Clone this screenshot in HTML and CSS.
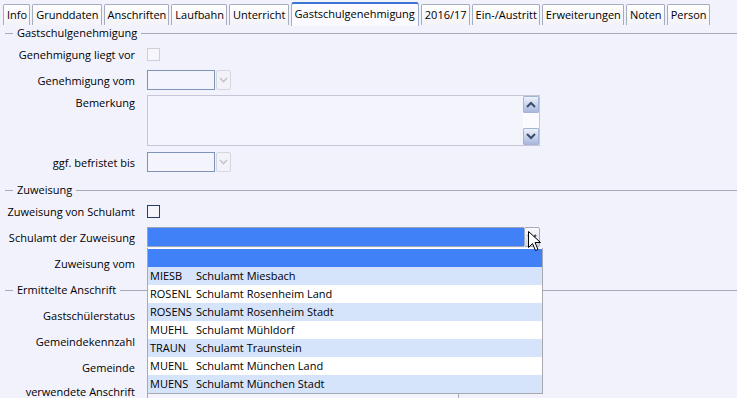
FILE: index.html
```html
<!DOCTYPE html>
<html lang="de">
<head>
<meta charset="utf-8">
<title>Gastschulgenehmigung</title>
<link rel="stylesheet" href="styles.css">
</head>
<body>
<div class="tabs">
  <div class="tab">Info</div>
  <div class="tab">Grunddaten</div>
  <div class="tab">Anschriften</div>
  <div class="tab">Laufbahn</div>
  <div class="tab">Unterricht</div>
  <div class="tab active">Gastschulgenehmigung</div>
  <div class="tab">2016/17</div>
  <div class="tab">Ein-/Austritt</div>
  <div class="tab">Erweiterungen</div>
  <div class="tab">Noten</div>
  <div class="tab">Person</div>
</div>

<div class="content">
  <div class="group-head g1"><span>Gastschulgenehmigung</span></div>
  <div class="row"><label>Genehmigung liegt vor</label><span class="check disabled"></span></div>
  <div class="row"><label>Genehmigung vom</label>
    <div class="date"><span class="date-box"></span><span class="date-btn"><svg width="9" height="6" viewBox="0 0 9 6"><polyline points="1,1 4.5,4.5 8,1" fill="none" stroke="#c4c4cc" stroke-width="1.6"/></svg></span></div>
  </div>
  <div class="row memo-row"><label>Bemerkung</label>
    <div class="memo">
      <div class="scroll">
        <span class="sbtn"><svg width="10" height="7" viewBox="0 0 10 7"><polyline points="1,6 5,2 9,6" fill="none" stroke="#3c4c6c" stroke-width="2"/></svg></span>
        <span class="strack"></span>
        <span class="sbtn"><svg width="10" height="7" viewBox="0 0 10 7"><polyline points="1,1 5,5 9,1" fill="none" stroke="#3c4c6c" stroke-width="2"/></svg></span>
      </div>
    </div>
  </div>
  <div class="row"><label>ggf. befristet bis</label>
    <div class="date"><span class="date-box"></span><span class="date-btn"><svg width="9" height="6" viewBox="0 0 9 6"><polyline points="1,1 4.5,4.5 8,1" fill="none" stroke="#c4c4cc" stroke-width="1.6"/></svg></span></div>
  </div>

  <div class="group-head g2"><span>Zuweisung</span></div>
  <div class="row"><label>Zuweisung von Schulamt</label><span class="check"></span></div>
  <div class="row"><label>Schulamt der Zuweisung</label>
    <div class="combo">
      <span class="combo-box"></span>
      <span class="combo-btn"><svg width="10" height="6" viewBox="0 0 10 6"><polyline points="1,1 5,5 9,1" fill="none" stroke="#3c4c6c" stroke-width="2"/></svg></span>
      <svg class="cursor" width="13" height="21" viewBox="0 0 13 21"><path d="M0.5,0.5 L0.5,16.5 L4.5,12.5 L7.5,19.5 L10,18.5 L7,11.5 L12.5,11.5 Z" fill="#fff" stroke="#000" stroke-width="1"/></svg>
      <div class="list">
        <div class="item selected"><span class="code"></span><span></span></div>
        <div class="item alt"><span class="code">MIESB</span><span>Schulamt Miesbach</span></div>
        <div class="item"><span class="code">ROSENL</span><span>Schulamt Rosenheim Land</span></div>
        <div class="item alt"><span class="code">ROSENS</span><span>Schulamt Rosenheim Stadt</span></div>
        <div class="item"><span class="code">MUEHL</span><span>Schulamt Mühldorf</span></div>
        <div class="item alt"><span class="code">TRAUN</span><span>Schulamt Traunstein</span></div>
        <div class="item"><span class="code">MUENL</span><span>Schulamt München Land</span></div>
        <div class="item alt"><span class="code">MUENS</span><span>Schulamt München Stadt</span></div>
      </div>
    </div>
  </div>
  <div class="row"><label>Zuweisung vom</label><span></span></div>

  <div class="group-head g3"><span>Ermittelte Anschrift</span></div>
  <div class="rows3">
    <div class="row"><label>Gastschülerstatus</label><span></span></div>
    <div class="row"><label>Gemeindekennzahl</label><span></span></div>
    <div class="row"><label>Gemeinde</label><span></span></div>
    <div class="row last"><label>verwendete Anschrift</label><span class="field-wide"></span></div>
  </div>
</div>
</body>
</html>
```

FILE: styles.css
```css
html, body {
  margin: 0;
  padding: 0;
}
body {
  background: #f2f2fc;
  font-family: "Open Sans", "Liberation Sans", Arial, sans-serif;
  font-size: 11px;
  color: #000;
  width: 737px;
  height: 398px;
  overflow: hidden;
}

/* Tabs */
.tabs {
  display: flex;
  align-items: flex-end;
  gap: 2px;
  padding-left: 3px;
  height: 26px;
}
.tab {
  height: 20px;
  line-height: 20px;
  padding: 0 2px 0 3px;
  margin-bottom: 1px;
  border: 1px solid #a4acc0;
  border-bottom: none;
  border-radius: 2px 2px 0 0;
  background: linear-gradient(#ffffff, #f3f3f8);
  white-space: nowrap;
}
.tab.active {
  height: 22px;
  line-height: 20px;
  margin-bottom: 0;
  border-top: 2px solid #3c74d4;
  border-left-color: #9cb0d4;
  border-right-color: #9cb0d4;
  border-radius: 3px 3px 0 0;
  background: #fbfbff;
  padding: 0 3px;
}

/* Group heads */
.group-head {
  display: flex;
  align-items: center;
  height: 14px;
}
.group-head::before {
  content: "";
  width: 8px;
  margin-left: 5px;
  border-top: 1px solid #a8a8b8;
}
.group-head::after {
  content: "";
  flex: 1;
  border-top: 1px solid #a8a8b8;
}
.group-head span {
  padding: 0 4px;
  line-height: 14px;
}
.g1 { margin-bottom: 1px; }
.g2 { margin-top: 8px; margin-bottom: 1px; }
.g3 { margin-top: 7px; margin-bottom: 5px; }

/* Rows */
.row {
  display: grid;
  grid-template-columns: 135px 1fr;
  column-gap: 12px;
  align-items: center;
  height: 26px;
}
.row label {
  text-align: right;
  white-space: nowrap;
}
.row.last {
  height: 22px;
  align-items: start;
}
.row.last label {
  line-height: 14px;
  padding-top: 5px;
}
.memo-row {
  height: 56px;
  align-items: start;
}
.memo-row label {
  padding-top: 2px;
  line-height: 16px;
}

/* Checkbox */
.check {
  width: 11px;
  height: 11px;
  border: 1px solid #2c3c68;
  background: #f4f4fa;
}
.check.disabled {
  border-color: #cfcfdc;
  background: #f6f6fc;
}

/* Date */
.date {
  display: flex;
  gap: 1px;
  height: 20px;
}
.date-box {
  width: 66px;
  height: 18px;
  border: 1px solid #7d93b8;
  background: #f4f4fd;
}
.date-btn {
  width: 13px;
  height: 18px;
  border: 1px solid #d6d6e2;
  border-radius: 2px;
  background: #f2f2f8;
  display: flex;
  align-items: center;
  justify-content: center;
}

/* Memo */
.memo {
  margin-top: 2px;
  width: 391px;
  height: 49px;
  border: 1px solid #c6c6d6;
  background: #f4f4fc;
  display: flex;
  justify-content: flex-end;
}
.scroll {
  width: 16px;
  display: flex;
  flex-direction: column;
  background: #fbfbff;
}
.sbtn {
  height: 15px;
  border: 1px solid #a4b4d4;
  border-radius: 1px;
  background: linear-gradient(#eef2fc, #a8b8dc);
  display: flex;
  align-items: center;
  justify-content: center;
}
.strack {
  flex: 1;
}

/* Combobox */
.combo {
  position: relative;
  display: flex;
  width: 393px;
  height: 20px;
}
.combo-box {
  flex: 1;
  border: 1px solid #9ca4b8;
  border-right: none;
  background: #4181f8;
}
.combo-btn {
  width: 14px;
  border: 1px solid #a4acc0;
  border-radius: 2px;
  background: linear-gradient(#fafafc, #d4d8e4);
  display: flex;
  align-items: center;
  justify-content: center;
}
.cursor {
  position: absolute;
  left: 381px;
  top: 4px;
  z-index: 5;
}
.list {
  position: absolute;
  left: 0;
  top: 21px;
  width: 394px;
  border: 1px solid #a8a8b0;
  border-top: none;
  background: #fff;
  z-index: 3;
}
.item {
  display: flex;
  height: 18px;
  line-height: 18px;
  padding-left: 2px;
  color: #000;
  white-space: nowrap;
}
.item.alt { background: #d5e3fb; }
.item.selected { background: #4181f8; border-top: 1px solid #fff; }
.item .code { width: 46px; }

/* Third group */
.field-wide {
  width: 310px;
  height: 18px;
  margin-top: 2px;
  border: 1px solid #a8a8b8;
  background: #f4f4fc;
}
```
